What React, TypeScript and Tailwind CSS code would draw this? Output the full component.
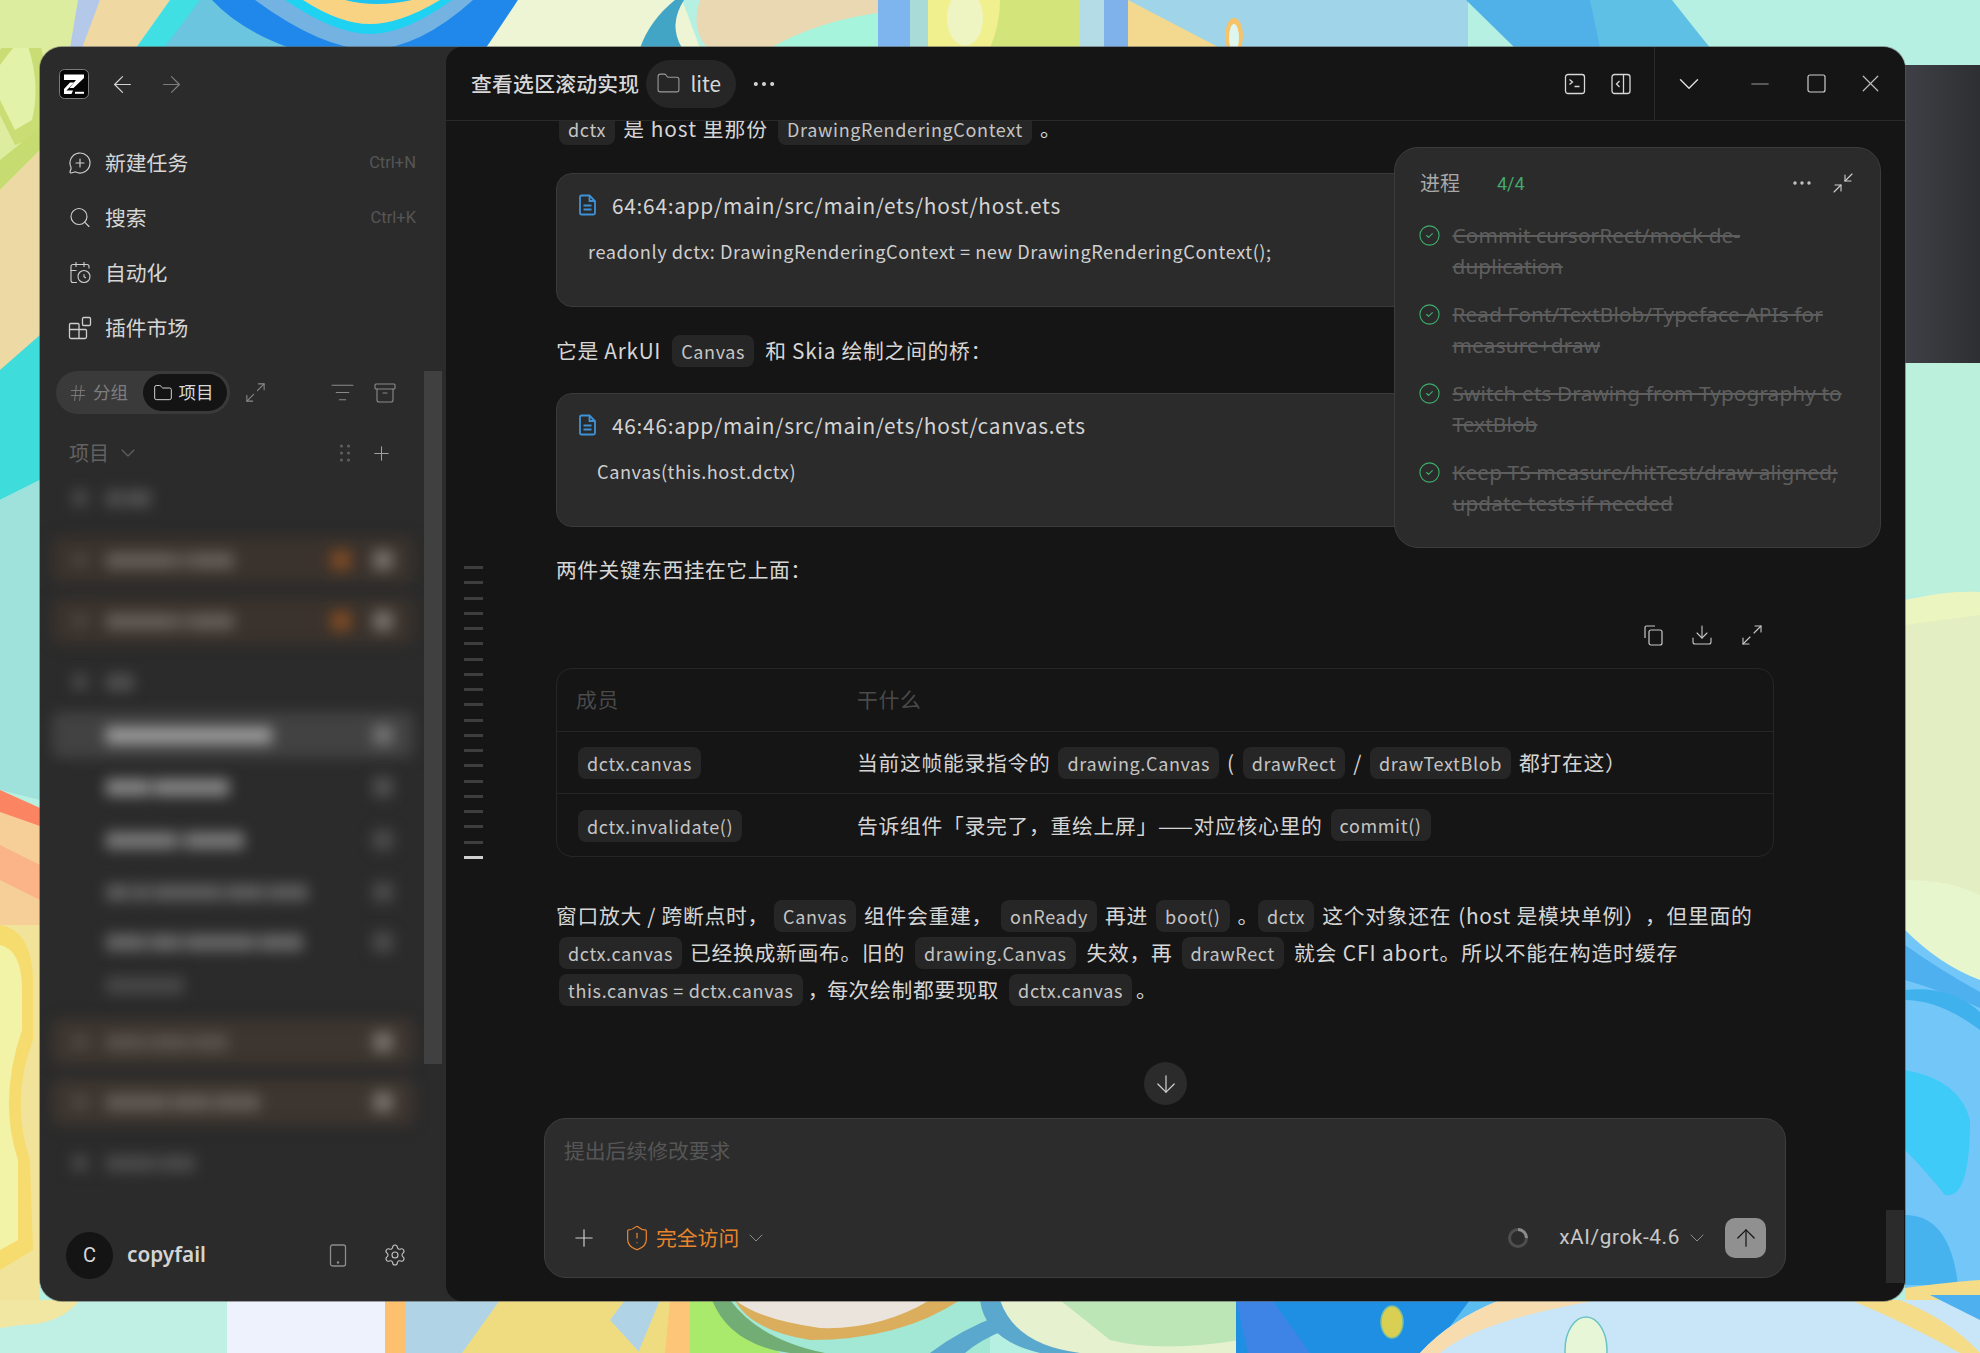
import React from "react";
import {
  ArrowLeft, ArrowRight, MessageCirclePlus, Search, CalendarClock, Hash, Folder, Maximize2, ListFilter, Archive,
  Plus, ChevronDown, Settings, Ellipsis, Minus, X, Minimize2, CircleCheck, Download, ArrowDown, ArrowUp, ShieldAlert,
} from "lucide-react";

function Wallpaper() {
  return (
    <svg className="absolute inset-0" width="1980" height="1353" viewBox="0 0 1980 1353">
      <rect width="1980" height="1353" fill="#b6f0e2" />
      {/* left column */}
      <rect x="0" y="0" width="60" height="220" fill="#dcedA0" />
      <path d="M0 50 Q20 25 30 15 Q55 70 42 135 L15 145 L0 115 Z" fill="#c9dd74" />
      <path d="M0 65 Q15 45 24 35 Q42 80 32 120 L15 130 L0 100 Z" fill="#e2f2a8" />
      <path d="M0 160 L40 128 L40 150 L0 190 Z" fill="#c6db70" />
      <path d="M0 190 L40 150 L40 340 L0 370 Z" fill="#ecd9a4" />
      <path d="M0 370 L40 335 L40 480 L0 500 Z" fill="#3fdcdc" />
      <path d="M0 500 L40 480 L40 800 L0 790 Z" fill="#9fe2dc" />
      <path d="M0 790 L40 808 L40 1000 L0 1000 Z" fill="#f6cf98" />
      <path d="M0 790 L40 808 L40 826 L0 812 Z" fill="#fb8463" />
      <path d="M0 845 L40 865 L40 900 L0 880 Z" fill="#fbb487" />
      <rect x="0" y="925" width="40" height="380" fill="#f2e39a" />
      <path d="M0 925 Q32 930 33 980 L33 1040 Q10 1100 30 1160 L33 1250 L0 1270 Z" fill="#f6dc6f" />
      <path d="M0 945 Q22 950 22 990 L22 1030 Q-2 1100 18 1160 L18 1240 L0 1250 Z" fill="#f2f3a6" />
      {/* top band */}
      <rect x="0" y="0" width="100" height="48" fill="#dcedA0" />
      <path d="M78 0 H100 L85 48 H70 Z" fill="#b4c8ea" />
      <path d="M100 0 H170 L136 48 H82 Z" fill="#efd8a2" />
      <path d="M170 0 H212 L284 48 H136 Z" fill="#3fdfe4" />
      <path d="M200 0 H220 L300 48 H164 Z" fill="#6cc5de" />
      <path d="M212 0 Q240 30 290 48 H486 Q505 25 518 0 Z" fill="#1f88ea" />
      <path d="M255 0 Q320 48 370 50 Q420 48 473 0 Z" fill="#74b2e2" />
      <path d="M285 0 Q335 34 370 34 Q405 34 452 0 Z" fill="#1fd2f2" />
      <path d="M303 0 Q340 24 370 24 Q400 24 440 0 Z" fill="#f9d384" />
      <path d="M345 0 Q375 8 412 0 Z" fill="#1fc4ee" />
      <path d="M518 0 H682 L700 48 H486 Z" fill="#eef5d4" />
      <path d="M640 48 Q650 20 675 0 L684 0 Q668 25 682 48 Z" fill="#43a5c6" />
      <path d="M682 0 H884 V48 H708 Q690 30 700 0 Z" fill="#e9d8b1" />
      <path d="M770 48 Q820 20 884 12 V48 Z" fill="#a7f4dd" />
      <rect x="878" y="0" width="32" height="48" fill="#7fb5ee" />
      <rect x="910" y="0" width="18" height="48" fill="#a9dcd8" />
      <rect x="928" y="0" width="152" height="48" fill="#d3e57a" />
      <path d="M928 0 H1000 Q1000 25 990 48 H928 Z" fill="#f0f08e" />
      <ellipse cx="965" cy="18" rx="18" ry="28" fill="#eef4c2" />
      <rect x="1080" y="0" width="24" height="48" fill="#b4dce6" />
      <rect x="1104" y="0" width="24" height="48" fill="#7fb2ea" />
      <rect x="1128" y="0" width="340" height="48" fill="#a0d4e9" />
      <path d="M1128 0 L1220 48 H1128 Z" fill="#f2d98f" />
      <ellipse cx="1234" cy="36" rx="9" ry="18" fill="#f6c369" />
      <ellipse cx="1234" cy="38" rx="5" ry="14" fill="#ddf7ee" />
      <path d="M1466 0 H1670 L1710 48 H1515 Z" fill="#4fb1e8" />
      <path d="M1590 0 H1672 L1710 48 H1600 Z" fill="#5fc0e6" />
      {/* right column */}
      <rect x="1905" y="363" width="75" height="232" fill="#bbf0dc" />
      <path d="M1905 600 Q1950 590 1980 592 V930 L1905 925 Z" fill="#e3eec2" />
      <path d="M1905 600 Q1950 590 1980 592 V615 L1905 625 Z" fill="#eaf5c0" />
      <path d="M1905 880 Q1950 880 1980 895 V985 Q1940 975 1905 930 Z" fill="#e8f6ce" />
      <path d="M1905 930 Q1940 965 1980 980 V1300 H1905 Z" fill="#73c6f8" />
      <path d="M1905 945 Q1940 970 1980 992 V1008 Q1940 990 1905 980 Z" fill="#4eb0ee" />
      <path d="M1905 990 Q1950 985 1980 1012 V1030 Q1940 1000 1905 1000 Z" fill="#3fb2ee" />
      <path d="M1905 1070 Q1960 1080 1970 1120 Q1970 1200 1945 1195 Q1925 1170 1905 1150 Z" fill="#3ecbf7" />
      <path d="M1905 1215 Q1950 1215 1958 1285 H1905 Z" fill="#46b3ee" />
      <path d="M1905 1288 Q1950 1282 1980 1280 V1310 H1905 Z" fill="#f5dc88" />
      <rect x="1905" y="1306" width="75" height="47" fill="#c8e5f8" />
      {/* bottom band */}
      <rect x="0" y="1300" width="227" height="53" fill="#c0efe4" />
      <path d="M0 1300 H80 Q60 1325 20 1325 L0 1328 Z" fill="#f2e7a2" />
      <rect x="227" y="1300" width="158" height="53" fill="#eef2fd" />
      <rect x="385" y="1300" width="20" height="53" fill="#fcc06e" />
      <rect x="405" y="1300" width="285" height="53" fill="#b0d4e6" />
      <path d="M500 1300 L462 1353 H640 L610 1320 L625 1300 Z" fill="#f0dc80" />
      <path d="M660 1300 H688 V1353 H638 Z" fill="#f0dc80" />
      <path d="M670 1300 H690 V1353 H665 Z" fill="#fcc577" />
      <path d="M690 1300 H715 L780 1353 H690 Z" fill="#a9e96b" />
      <path d="M715 1300 H990 V1353 H780 Z" fill="#a2e8d4" />
      <path d="M712 1300 H730 Q760 1340 825 1353 H790 Q730 1345 712 1300 Z" fill="#72ad75" />
      <path d="M735 1300 H960 Q900 1340 810 1340 Q750 1330 735 1300 Z" fill="#dbae5d" />
      <path d="M735 1300 H930 Q880 1330 820 1328 Q760 1320 735 1300 Z" fill="#ebe4dc" />
      <path d="M990 1300 H1240 V1353 H1050 Q1000 1340 990 1300 Z" fill="#e5f1cf" />
      <path d="M1060 1300 H1240 V1340 Q1160 1353 1110 1340 Z" fill="#bde6b6" />
      <path d="M980 1300 H1000 Q1015 1345 1080 1353 H1040 Q985 1340 980 1300 Z" fill="#5ba8cf" />
      <path d="M930 1353 Q960 1330 1000 1315 L1005 1330 Q980 1340 965 1353 Z" fill="#5ba8cf" />
      <rect x="1236" y="1300" width="264" height="53" fill="#1f8fe3" />
      <path d="M1236 1300 H1272 L1310 1353 H1248 Z" fill="#3e84e6" />
      <path d="M1272 1300 H1500 L1445 1353 H1430 L1470 1300 Z" fill="#5cbdf1" />
      <ellipse cx="1392" cy="1322" rx="11" ry="16" fill="#d9cf52" stroke="#7fbf9a" strokeWidth="1.5" />
      <path d="M1500 1300 H1980 V1353 H1420 Q1450 1320 1500 1300 Z" fill="#c9e6f9" />
      <path d="M1500 1300 H1600 Q1480 1320 1440 1353 H1420 Q1450 1320 1500 1300 Z" fill="#f7dcb0" />
      <path d="M1850 1300 H1900 Q1950 1320 1980 1353 H1960 Q1900 1320 1850 1300 Z" fill="#f5dc88" />
      <path d="M1930 1295 H1980 V1320 Z" fill="#4eb0ee" />
      <ellipse cx="1586" cy="1350" rx="21" ry="33" fill="#e6f6d6" stroke="#6cc3c6" strokeWidth="1.5" />
    </svg>
  );
}

const Logo = () => (
  <svg width="30" height="30" viewBox="0 0 30 30">
    <rect x="0.5" y="0.5" width="29" height="29" rx="5" fill="#050505" stroke="#7a7a7a" />
    <path d="M5 5.5 H25 V9 L14.5 19 H10.5 L17 11 H5 Z" fill="#fff" />
    <path d="M5 20 L11 13.5 H15 L7.5 21.5 H14 L12.5 25 H5 Z" fill="#fff" />
    <rect x="16" y="22.8" width="9" height="2" fill="#fff" />
  </svg>
);

const PluginIcon = () => (
  <svg width="24" height="24" viewBox="0 0 24 24" fill="none" stroke="#cfcfcf" strokeWidth="1.3">
    <path d="M1.5 8.5 Q1.5 7.5 2.5 7.5 H10 Q11 7.5 11 8.5 V13.5 H1.5 Z" />
    <path d="M1.5 13.5 V21 Q1.5 22.5 3 22.5 H11 V13.5 M11 13.5 H17.5 Q18.5 13.5 18.5 14.5 V21 Q18.5 22.5 17 22.5 H11" />
    <rect x="14.5" y="1.5" width="8" height="8" rx="1.2" />
  </svg>
);

const DotsGrid = () => (
  <svg width="12" height="18" viewBox="0 0 12 18" fill="#5e5e5e">
    <circle cx="2.5" cy="2" r="1.6" /><circle cx="9.5" cy="2" r="1.6" />
    <circle cx="2.5" cy="9" r="1.6" /><circle cx="9.5" cy="9" r="1.6" />
    <circle cx="2.5" cy="16" r="1.6" /><circle cx="9.5" cy="16" r="1.6" />
  </svg>
);

const TerminalBox = () => (
  <svg width="22" height="22" viewBox="0 0 22 22" fill="none" stroke="#d8d8d8" strokeWidth="1.3">
    <rect x="1.5" y="1.5" width="19" height="19" rx="2.5" />
    <path d="M5.5 6.5 L8.5 9 L5.5 11.5 M10.5 13.5 H15.5" />
  </svg>
);

const PanelBox = () => (
  <svg width="22" height="22" viewBox="0 0 22 22" fill="none" stroke="#d8d8d8" strokeWidth="1.3">
    <rect x="2" y="1.5" width="18" height="19" rx="2.5" />
    <path d="M13.5 1.5 V20.5 M9.5 8 L6.5 11 L9.5 14" />
  </svg>
);

const Maxi = () => (
  <svg width="19" height="19" viewBox="0 0 19 19" fill="none" stroke="#cfcfcf" strokeWidth="1.2">
    <rect x="1" y="1" width="17" height="17" rx="2" />
  </svg>
);

const Phone = () => (
  <svg width="18" height="23" viewBox="0 0 18 23" fill="none" stroke="#8c8c8c" strokeWidth="1.3">
    <rect x="1.5" y="1" width="15" height="21" rx="2" />
    <circle cx="9" cy="18.5" r="0.6" fill="#8c8c8c" />
  </svg>
);

const FileBlue = () => (
  <svg width="19" height="22" viewBox="0 0 19 22" fill="none" stroke="#3f92d6" strokeWidth="1.8">
    <path d="M2 3 Q2 1.5 3.5 1.5 H11.5 L17 7 V19 Q17 20.5 15.5 20.5 H3.5 Q2 20.5 2 19 Z" />
    <path d="M11.5 1.5 V7 H17" />
    <path d="M5.5 11.5 H13.5 M5.5 15.5 H13.5" />
  </svg>
);

const CopyIcon = () => (
  <svg width="22" height="22" viewBox="0 0 22 22" fill="none" stroke="#c8c8c8" strokeWidth="1.2">
    <rect x="7" y="6" width="13" height="15" rx="2" />
    <path d="M3 14 V3.5 Q3 2 4.5 2 H13" />
  </svg>
);

const Spinner = () => (
  <svg width="22" height="22" viewBox="0 0 22 22" fill="none" strokeWidth="3">
    <circle cx="11" cy="11" r="8.5" stroke="#4e4e4e" />
    <path d="M11 2.5 A8.5 8.5 0 0 1 19.5 11" stroke="#8c8c8c" />
  </svg>
);

const Chip = ({ children }: { children: React.ReactNode }) => (
  <code className="mx-[8px] inline-flex h-[32px] items-center rounded-[8px] bg-[#262626] px-[9px] font-['Noto_Sans_CJK_SC',sans-serif] text-[18px] leading-none tracking-[0.65px] text-[#c4c4c4]">
    {children}
  </code>
);

type Blurred = {
  row: string;
  box: string;
  icon?: string;
  bars: number[];
  bar: string;
  orange?: boolean;
  right?: string;
};

const rows: Blurred[] = [
  { row: "h-[62px]", box: "", icon: "bg-[#4a4a4a]", bars: [16, 26], bar: "bg-[#505050]" },
  { row: "h-[62px]", box: "bg-[#3a322c]", icon: "bg-[#4a423c]", bars: [70, 8, 44], bar: "bg-[#645c56]", orange: true, right: "bg-[#76706b]" },
  { row: "h-[60px]", box: "bg-[#3a322c]", icon: "bg-[#4a423c]", bars: [70, 8, 44], bar: "bg-[#645c56]", orange: true, right: "bg-[#76706b]" },
  { row: "h-[62px]", box: "", icon: "bg-[#4a4a4a]", bars: [28], bar: "bg-[#505050]" },
  { row: "h-[44px]", box: "bg-[#424242]", bars: [166], bar: "bg-[#9a9a9a]", right: "bg-[#727272]" },
  { row: "h-[60px]", box: "", bars: [44, 76], bar: "bg-[#868686]", right: "bg-[#505050]" },
  { row: "h-[46px]", box: "", bars: [70, 4, 58], bar: "bg-[#7a7a7a]", right: "bg-[#4c4c4c]" },
  { row: "h-[58px]", box: "", bars: [24, 16, 70, 40, 40], bar: "bg-[#5c5c5c]", right: "bg-[#4c4c4c]" },
  { row: "h-[42px]", box: "", bars: [40, 32, 72, 44], bar: "bg-[#666666]", right: "bg-[#4c4c4c]" },
  { row: "h-[44px]", box: "", bars: [78], bar: "bg-[#484848]" },
  { row: "h-[70px]", box: "bg-[#3d352f]", icon: "bg-[#4f4741]", bars: [40, 40, 36], bar: "bg-[#57504b]", right: "bg-[#76706b]" },
  { row: "h-[50px]", box: "bg-[#3d352f]", icon: "bg-[#4f4741]", bars: [62, 40, 46], bar: "bg-[#625a55]", right: "bg-[#76706b]" },
  { row: "h-[72px]", box: "", icon: "bg-[#4a4a4a]", bars: [50, 36], bar: "bg-[#4a4a4a]" },
];

function Sidebar() {
  const nav = [
    { icon: <MessageCirclePlus size={26} strokeWidth={1.15} />, label: "新建任务", kbd: "Ctrl+N" },
    { icon: <Search size={27} strokeWidth={1.15} />, label: "搜索", kbd: "Ctrl+K" },
    { icon: <CalendarClock size={27} strokeWidth={1.1} />, label: "自动化" },
    { icon: <PluginIcon />, label: "插件市场" },
  ];
  return (
    <aside className="relative flex w-[406px] shrink-0 flex-col bg-[#2b2b2b]">
      <div className="flex h-[74px] items-center pl-[19px]">
        <Logo />
        <ArrowLeft size={27} strokeWidth={1.1} className="ml-[20px] text-[#d0d0d0]" />
        <ArrowRight size={27} strokeWidth={1.1} className="ml-[22px] text-[#7c7c7c]" />
      </div>
      <nav className="mt-[14px] flex flex-col">
        {nav.map((n) => (
          <div key={n.label} className="flex h-[55px] items-center pl-[28px] pr-[30px] text-[#cfcfcf]">
            <span className="flex w-[24px] justify-center">{n.icon}</span>
            <span className="ml-[13px] text-[20.8px] text-[#d6d6d6]">{n.label}</span>
            {n.kbd && <span className="ml-auto pt-[1px] font-['Roboto',sans-serif] text-[16.5px] text-[#565656]">{n.kbd}</span>}
          </div>
        ))}
      </nav>
      <div className="mt-[16px] flex h-[43px] items-center pl-[16px]">
        <div className="flex h-[43px] w-[174px] items-center rounded-full bg-[#3a3a3a] pl-[12px] pr-[3px] text-[17.5px]">
          <Hash size={20} strokeWidth={1.1} className="text-[#7e7e7e]" />
          <span className="ml-[5px] text-[#7e7e7e]">分组</span>
          <div className="ml-auto flex h-[37px] w-[84px] items-center justify-center rounded-full bg-[#141414] pr-[4px] text-[#d8d8d8]">
            <Folder size={20} strokeWidth={1.15} />
            <span className="ml-[6px]">项目</span>
          </div>
        </div>
        <Maximize2 size={23} strokeWidth={1.1} className="ml-[13.5px] text-[#8a8a8a]" />
        <ListFilter size={25} strokeWidth={1.1} className="ml-[63px] text-[#8a8a8a]" />
        <Archive size={24} strokeWidth={1.1} className="ml-[18.5px] text-[#8a8a8a]" />
      </div>
      <div className="mt-[25px] flex h-[28px] items-center pl-[29px] text-[#626262]">
        <span className="text-[20px]">项目</span>
        <ChevronDown size={24} strokeWidth={1.1} className="ml-[7px]" />
        <span className="ml-auto mr-[19px] flex items-center"><DotsGrid /></span>
        <Plus size={23} strokeWidth={1.1} className="mr-[53px] text-[#a0a0a0]" />
      </div>
      <div className="flex flex-col">
        {rows.map((r, i) => (
          <div key={i} className={`flex items-center ${r.row}`}>
            <div className={`ml-[12px] flex h-[46px] w-[362px] items-center rounded-[8px] pl-[20px] pr-[21px] blur-[7px] ${r.box}`}>
              <span className={`h-[16px] w-[16px] rounded-[3px] ${r.icon ?? ""}`} />
              <span className="ml-[18px] flex items-center gap-[3px]">
                {r.bars.map((w, j) => (
                  <span key={j} className={`h-[17px] ${r.bar}`} style={{ width: w }} />
                ))}
              </span>
              <span className="ml-auto flex items-center">
                {r.orange && <span className="mr-[22px] h-[20px] w-[20px] bg-[#7d4a24]" />}
                {r.right && <span className={`h-[20px] w-[20px] ${r.right}`} />}
              </span>
            </div>
          </div>
        ))}
      </div>
      <div className="mt-auto flex h-[92px] items-center pl-[26px] pr-[39px]">
        <div className="flex h-[47px] w-[47px] items-center justify-center rounded-full bg-[#141414] font-['Roboto',sans-serif] text-[20px] text-[#d8d8d8]">C</div>
        <span className="ml-[14px] font-['Noto_Sans',sans-serif] text-[20.8px] font-semibold text-[#d4d4d4]">copyfail</span>
        <span className="ml-auto flex items-center"><Phone /></span>
        <Settings size={24} strokeWidth={1.1} className="ml-[36px] text-[#c4c4c4]" />
      </div>
      <div className="absolute left-[384px] top-[324px] h-[693px] w-[18px] bg-[#404040]" />
    </aside>
  );
}

function CodeCard({ path, code, indent }: { path: string; code: string; indent: string }) {
  return (
    <div className="h-[134px] w-[1218px] rounded-[16px] border border-[#3a3a3a] bg-[#2b2b2b] pl-[21px] pt-[19px]">
      <div className="flex h-[24px] items-center">
        <FileBlue />
        <span className="ml-[15px] text-[20.8px] tracking-[0.75px] text-[#d4d4d4]">{path}</span>
      </div>
      <div className={`mt-[22px] text-[18.2px] leading-[24px] tracking-[0.53px] text-[#cfcfcf] ${indent}`}>{code}</div>
    </div>
  );
}

function Todo() {
  const items = [
    ["Commit cursorRect/mock de-", "duplication"],
    ["Read Font/TextBlob/Typeface APIs for", "measure+draw"],
    ["Switch ets Drawing from Typography to", "TextBlob"],
    ["Keep TS measure/hitTest/draw aligned;", "update tests if needed"],
  ];
  return (
    <div className="absolute left-[948px] top-[26px] flex h-[401px] w-[487px] flex-col rounded-[24px] border border-[#3c3c3c] bg-[#2b2b2b] pl-[23px] pr-[25px] pt-[21px]">
      <div className="flex h-[28px] items-center">
        <span className="ml-[2px] text-[20px] text-[#a8a8a8]">进程</span>
        <span className="ml-[37px] font-['Roboto',sans-serif] text-[18px] text-[#44a86b]">4/4</span>
        <Ellipsis size={24} strokeWidth={1.4} className="ml-auto mr-[17px] text-[#c8c8c8]" />
        <Minimize2 size={24} strokeWidth={1.1} className="text-[#d0d0d0]" />
      </div>
      <div className="mt-[23px] flex flex-col gap-[17px]">
        {items.map((it) => (
          <div key={it[0]} className="flex">
            <CircleCheck size={23} strokeWidth={1.15} className="mt-[4px] shrink-0 text-[#3fae6c]" />
            <div className="ml-[11.5px] whitespace-nowrap font-['Noto_Sans',sans-serif] text-[20.8px] leading-[31px] tracking-[0.1px] text-[#5e5e5e] line-through">
              {it[0]}
              <br />
              {it[1]}
            </div>
          </div>
        ))}
      </div>
    </div>
  );
}

function Table() {
  return (
    <div className="h-[189px] w-[1218px] rounded-[16px] border border-[#262626] tracking-[0.7px]">
      <div className="flex h-[63px] items-center border-b border-[#262626] pb-[2px] text-[20.8px] text-[#4a4a4a]">
        <span className="ml-[19px] w-[281px]">成员</span>
        <span>干什么</span>
      </div>
      <div className="flex h-[62px] items-center border-b border-[#262626] text-[#d4d4d4]">
        <span className="w-[300px] pl-[13px]"><Chip>dctx.canvas</Chip></span>
        <span className="flex items-center">
          当前这帧能录指令的<Chip>drawing.Canvas</Chip>(<Chip>drawRect</Chip>/<Chip>drawTextBlob</Chip>都打在这）
        </span>
      </div>
      <div className="flex h-[62px] items-center text-[#d4d4d4]">
        <span className="w-[300px] pl-[13px]"><Chip>dctx.invalidate()</Chip></span>
        <span className="flex items-center">
          告诉组件「录完了，重绘上屏」——对应核心里的<Chip>commit()</Chip>
        </span>
      </div>
    </div>
  );
}

function Main() {
  return (
    <main className="relative flex min-w-0 flex-1 flex-col overflow-hidden rounded-l-[16px] bg-[#151515]">
      <header className="flex h-[74px] shrink-0 items-center border-b border-[#2a2a2a] pl-[25px] text-[#d8d8d8]">
        <span className="text-[20.8px] font-medium tracking-[0.25px]">查看选区滚动实现</span>
        <span className="ml-[7px] flex h-[48px] w-[90px] items-center rounded-full bg-[#262626] pl-[10px]">
          <Folder size={25} strokeWidth={1.05} className="text-[#9a9a9a]" />
          <span className="ml-[9px] text-[20.8px]">lite</span>
        </span>
        <Ellipsis size={28} strokeWidth={1.5} className="ml-[14px]" />
        <div className="ml-auto flex h-full items-center">
          <TerminalBox />
          <span className="ml-[24px] flex items-center"><PanelBox /></span>
          <div className="ml-[22px] h-full w-px bg-[#2a2a2a]" />
          <ChevronDown size={34} strokeWidth={1.05} className="ml-[17px]" />
          <Minus size={28} strokeWidth={1} className="ml-[40px] text-[#9a9a9a]" />
          <span className="ml-[32.5px] flex items-center"><Maxi /></span>
          <X size={29} strokeWidth={1} className="ml-[30px] mr-[20.5px] text-[#bdbdbd]" />
        </div>
      </header>

      <div className="relative min-h-0 flex-1 overflow-hidden">
        <div className="-mt-[11px] ml-[110px] flex w-[1218px] flex-col text-[20.8px] leading-[37px] tracking-[0.5px] text-[#d6d6d6]">
          <p className="-ml-[5px] tracking-[1px]"><Chip>dctx</Chip>是 host 里那份<span className="ml-[2px]"><Chip>DrawingRenderingContext</Chip></span>。</p>
          <div className="mt-[26px]">
            <CodeCard path="64:64:app/main/src/main/ets/host/host.ets" code="readonly dctx: DrawingRenderingContext = new DrawingRenderingContext();" indent="pl-[10px]" />
          </div>
          <p className="mt-[25px] tracking-[0.7px]">它是 ArkUI<span className="ml-[3px] mr-[3px]"><Chip>Canvas</Chip></span>和 Skia 绘制之间的桥：</p>
          <div className="mt-[24px]">
            <CodeCard path="46:46:app/main/src/main/ets/host/canvas.ets" code="Canvas(this.host.dctx)" indent="pl-[19px]" />
          </div>
          <p className="mt-[24px]">两件关键东西挂在它上面：</p>
          <div className="mt-[34px] flex h-[26px] items-center justify-end pr-[10px] text-[#c8c8c8]">
            <CopyIcon />
            <Download size={24} strokeWidth={1.1} className="ml-[26px]" />
            <Maximize2 size={24} strokeWidth={1.1} className="ml-[26px]" />
          </div>
          <div className="mt-[20px]"><Table /></div>
          <p className="mt-[40px] tracking-[0.7px]">
            窗口放大 / 跨断点时，<span className="-ml-[3px]"><Chip>Canvas</Chip></span>组件会重建，<Chip>onReady</Chip>再进<Chip>boot()</Chip><span className="-mr-[9px]">。</span><Chip>dctx</Chip>这个对象还在<span className="ml-[7px]">(host 是模块单例）</span><span className="ml-[10px]">，</span>但里面的
            <br />
            <span className="-ml-[5px]"><Chip>dctx.canvas</Chip></span>已经换成新画布。旧的<span className="ml-[2px] mr-[3px]"><Chip>drawing.Canvas</Chip></span>失效，再<span className="ml-[1px] mr-[2px]"><Chip>drawRect</Chip></span><span className="tracking-[0.9px]">就会 CFI abort。所以不能在构造时缓存</span>
            <br />
            <span className="-ml-[5px]"><Chip>this.canvas = dctx.canvas</Chip></span><span className="-ml-[3px]">，</span><span className="-ml-[2px]">每次绘制都要现取</span><span className="ml-[2px]"><Chip>dctx.canvas</Chip></span><span className="-ml-[4px]">。</span>
          </p>
        </div>
        <div className="absolute left-[18px] top-[445px] flex w-[19px] flex-col gap-[12.26px]">
          {Array.from({ length: 19 }).map((_, i) => (
            <span key={i} className="h-[3px] bg-[#3e3e3e]" />
          ))}
          <span className="h-[3px] bg-[#cfcfcf]" />
        </div>
        <Todo />
      </div>

      <div className="h-[201px] shrink-0 pl-[98px] pt-[18px]">
        <div className="flex h-[160px] w-[1242px] flex-col rounded-[22px] border border-[#3e3e3e] bg-[#2c2c2c] pl-[19px] pr-[19px]">
          <div className="mt-[16px] text-[20.8px] leading-[30px] text-[#565656]">提出后续修改要求</div>
          <div className="mt-[53px] flex h-[40px] items-center">
            <Plus size={28} strokeWidth={1} className="ml-[6px] text-[#d0d0d0]" />
            <ShieldAlert size={28} strokeWidth={1.05} className="ml-[25px] text-[#e8852c]" />
            <span className="ml-[5px] text-[20.8px] text-[#e8852c]">完全访问</span>
            <ChevronDown size={24} strokeWidth={1} className="ml-[5px] text-[#8c8c8c]" />
            <span className="ml-auto flex items-center"><Spinner /></span>
            <span className="ml-[30px] font-['Roboto',sans-serif] text-[20.8px] tracking-[0.6px] text-[#c8c8c8]">xAI/grok-4.6</span>
            <ChevronDown size={24} strokeWidth={1} className="ml-[5px] text-[#8c8c8c]" />
            <span className="ml-[16px] flex h-[40px] w-[41px] items-center justify-center rounded-[10px] bg-[#909090] text-[#141414]">
              <ArrowUp size={28} strokeWidth={1.05} />
            </span>
          </div>
        </div>
      </div>
      <div className="absolute left-[698px] top-[1015px] flex h-[43px] w-[43px] items-center justify-center rounded-full bg-[#2b2b2b] text-[#d0d0d0]">
        <ArrowDown size={28} strokeWidth={1.05} />
      </div>
      <div className="absolute right-[1px] top-[1163px] h-[73px] w-[18px] bg-[#2b2b2b]" />
    </main>
  );
}

export default function App() {
  return (
    <div className="relative h-[1353px] w-[1980px] overflow-hidden font-['Noto_Sans_CJK_SC',sans-serif]">
      <Wallpaper />
      <div className="absolute left-[1880px] top-[65px] h-[298px] w-[100px] bg-gradient-to-r from-[#44464c] to-[#2e2f33]" />
      <div className="absolute left-[40px] top-[47px] flex h-[1254px] w-[1865px] overflow-hidden rounded-[22px] bg-[#2b2b2b] shadow-[0_0_0_1px_rgba(90,90,90,0.55)]">
        <Sidebar />
        <Main />
      </div>
    </div>
  );
}
